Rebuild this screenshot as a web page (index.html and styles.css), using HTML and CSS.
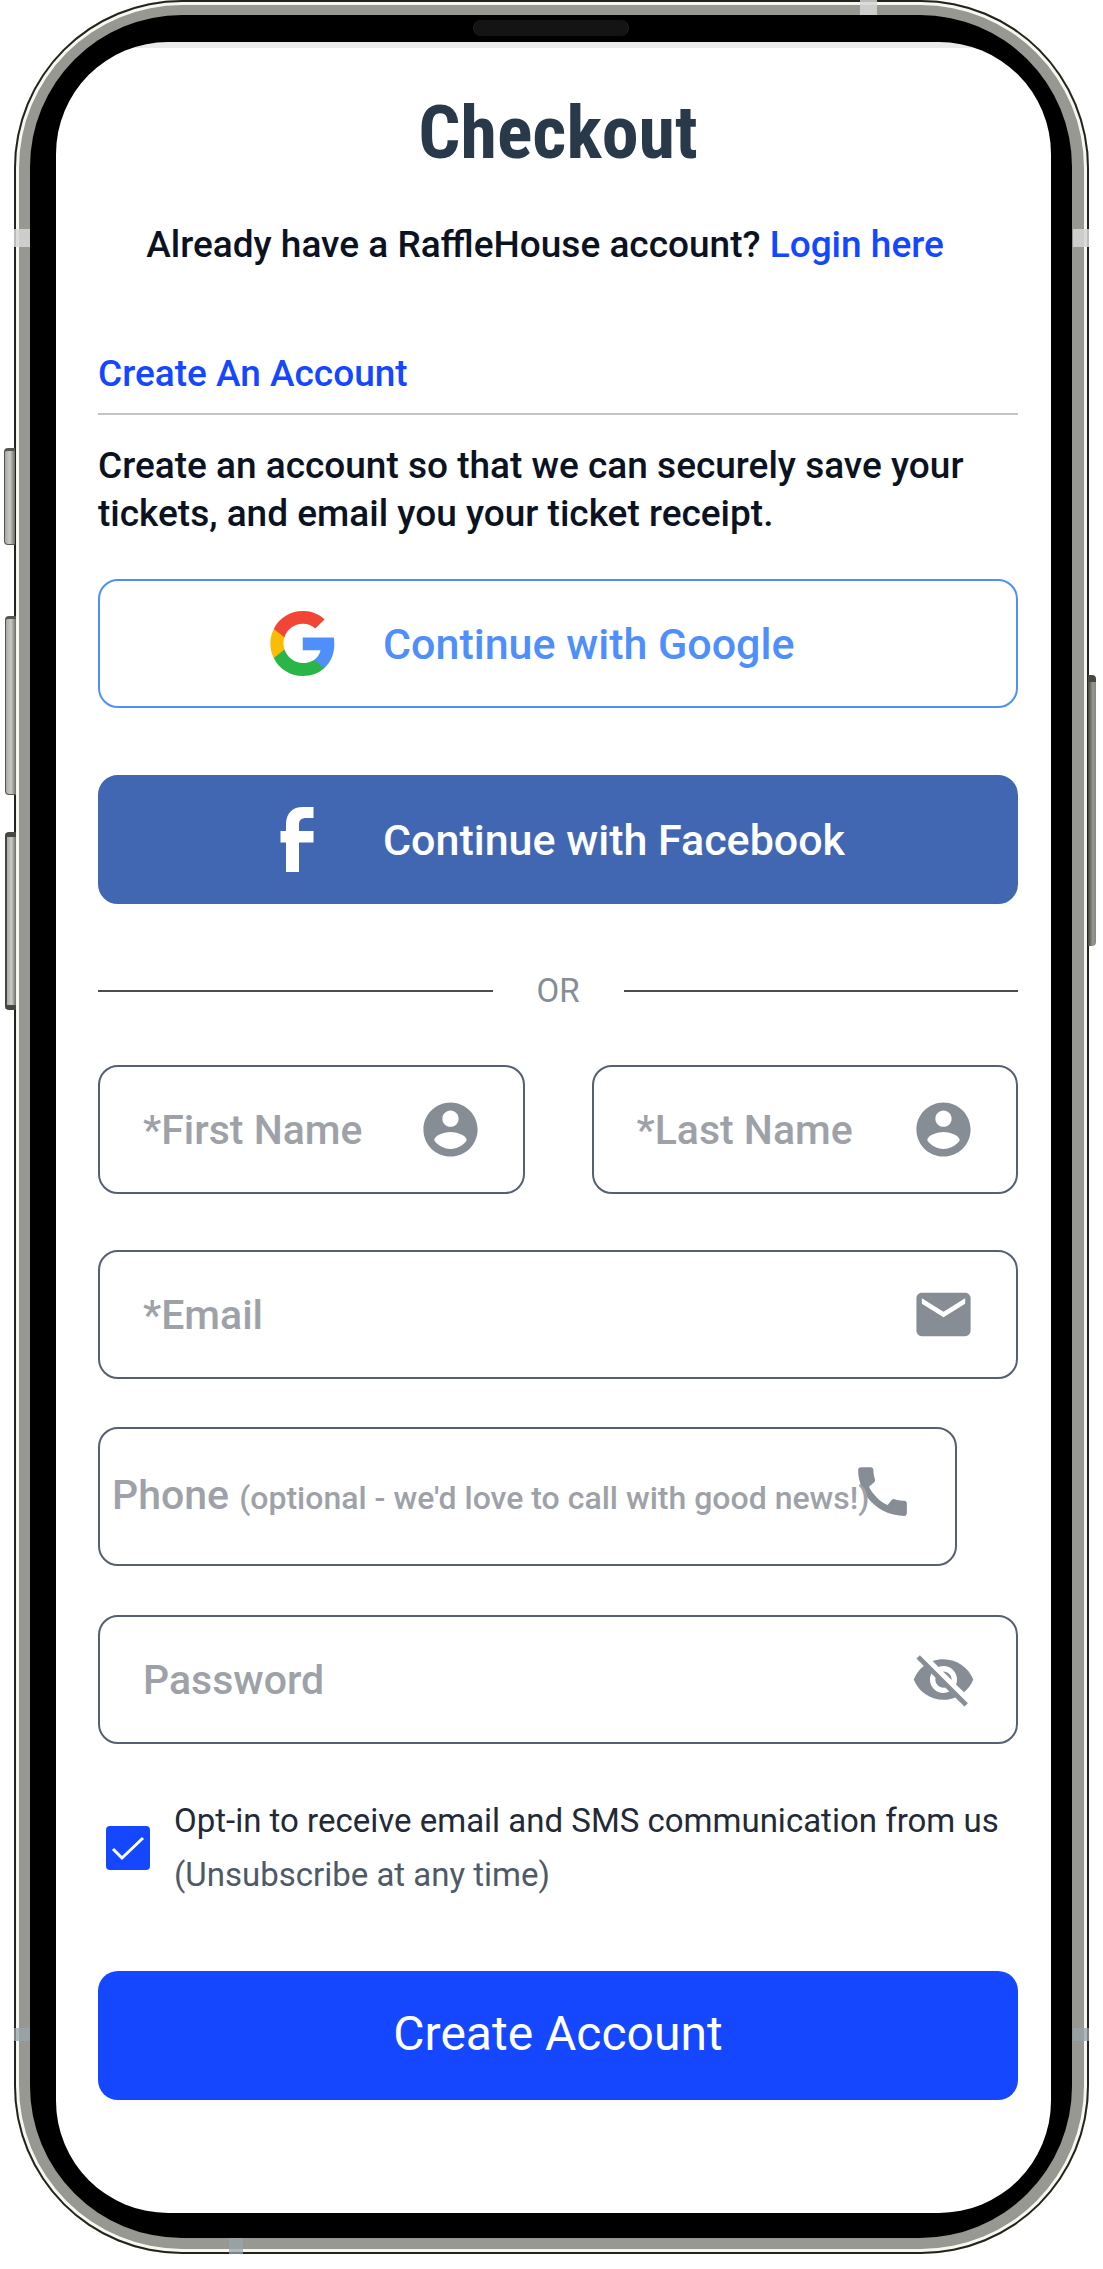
FILE: index.html
```html
<!DOCTYPE html>
<html lang="en">
<head>
<meta charset="utf-8">
<meta name="viewport" content="width=device-width, initial-scale=1">
<title>Checkout</title>
<link rel="stylesheet" href="styles.css">
</head>
<body>
<div class="phone">
  <span class="key key-mute"></span>
  <span class="key key-up"></span>
  <span class="key key-down"></span>
  <span class="key key-power"></span>
  <span class="band band-top"></span>
  <span class="band band-left"></span>
  <span class="band band-right"></span>
  <span class="band band-cool band-low-left"></span>
  <span class="band band-cool band-low-right"></span>
  <span class="band band-cool band-bottom"></span>
  <div class="bezel">
    <span class="speaker"></span>
    <main class="screen">
      <h1 class="title">Checkout</h1>
      <p class="login">Already have a RaffleHouse account? <a class="link" href="#login">Login here</a></p>

      <h2 class="section-title">Create An Account</h2>
      <p class="intro">Create an account so that we can securely save your tickets, and email you your ticket receipt.</p>

      <form class="form" action="#">
        <button class="social social-google" type="button">
          <svg class="social-icon" viewBox="0 0 48 48" aria-hidden="true">
            <path fill="#4f8ffb" d="M47.5 24.5c0-1.600-.2-3.300-.4-4.900H24.200v9.300h13.100c-.6 3-2.300 5.500-4.800 7.200v6h7.700c4.600-4.200 7.300-10.400 7.300-17.600z"/>
            <path fill="#29b548" d="M24.200 48c6.500 0 12-2.100 16-5.900l-7.700-6c-2.200 1.500-5 2.300-8.300 2.300-6.300 0-11.600-4.200-13.500-9.900H2.800v6.200C6.700 42.700 14.800 48 24.200 48z"/>
            <path fill="#fbbc05" d="M10.700 28.500c-1-3-1-6.100 0-9.100v-6.200H2.800c-3.400 6.800-3.400 14.700 0 21.500z"/>
            <path fill="#f24535" d="M24.200 9.500c3.400-.1 6.800 1.200 9.200 3.500l6.900-6.800C35.900 2.100 30.200-.1 24.200 0 14.800 0 6.700 5.300 2.800 13.200l7.900 6.200c1.900-5.700 7.200-9.900 13.500-9.900z"/>
          </svg>
          <span>Continue with Google</span>
        </button>
        <button class="social social-facebook" type="button">
          <svg class="social-icon" viewBox="0 0 65 65" aria-hidden="true">
            <path fill="#fff" d="M16 65V35.500H10.500V24H16v-6.500C16 6 22.500 0 33 0h10.500v11H36.500c-5 0-7.500 2-7.500 6.500V24h14.500v11.500H29V65z"/>
          </svg>
          <span>Continue with Facebook</span>
        </button>

        <div class="divider"><span class="divider-text">OR</span></div>

        <div class="names">
          <div class="field">
            <input class="input" type="text" name="first" placeholder="*First Name" aria-label="First Name">
            <svg class="icon" viewBox="0 0 24 24" aria-hidden="true"><path d="M12 2C6.480 2 2 6.480 2 12s4.480 10 10 10 10-4.480 10-10S17.520 2 12 2zm0 3c1.660 0 3 1.340 3 3s-1.340 3-3 3-3-1.340-3-3 1.340-3 3-3zm0 14.200c-2.500 0-4.710-1.280-6-3.220.03-1.990 4-3.080 6-3.080 1.990 0 5.970 1.090 6 3.080-1.290 1.940-3.500 3.220-6 3.220z"/></svg>
          </div>
          <div class="field">
            <input class="input" type="text" name="last" placeholder="*Last Name" aria-label="Last Name">
            <svg class="icon" viewBox="0 0 24 24" aria-hidden="true"><path d="M12 2C6.480 2 2 6.480 2 12s4.480 10 10 10 10-4.480 10-10S17.520 2 12 2zm0 3c1.660 0 3 1.340 3 3s-1.340 3-3 3-3-1.340-3-3 1.340-3 3-3zm0 14.200c-2.500 0-4.710-1.280-6-3.220.03-1.990 4-3.080 6-3.080 1.990 0 5.970 1.090 6 3.080-1.290 1.940-3.500 3.220-6 3.220z"/></svg>
          </div>
        </div>

        <div class="field">
          <input class="input" type="email" name="email" placeholder="*Email" aria-label="Email">
          <svg class="icon" viewBox="0 0 24 24" aria-hidden="true"><path d="M20 4H4c-1.100 0-1.990.9-1.990 2L2 18c0 1.100.9 2 2 2h16c1.100 0 2-.9 2-2V6c0-1.100-.9-2-2-2zm0 4l-8 5-8-5V6l8 5 8-5v2z"/></svg>
        </div>

        <div class="field field-phone">
          <label class="phone-label" for="tel">Phone <span class="phone-note">(optional - we'd love to call with good news!)</span></label>
          <input class="input" id="tel" type="tel" name="phone">
          <svg class="icon" viewBox="0 0 24 24" aria-hidden="true"><path d="M20.010 15.380c-1.230 0-2.420-.2-3.530-.56-.35-.12-.74-.03-1.010.24l-1.570 1.970c-2.830-1.350-5.480-3.900-6.890-6.830l1.950-1.660c.27-.28.35-.67.24-1.020-.37-1.110-.56-2.300-.56-3.530 0-.54-.45-.99-.99-.99H4.190C3.650 3 3 3.240 3 3.990 3 13.280 10.730 21 20.010 21c.71 0 .99-.63.99-1.180v-3.450c0-.54-.45-.99-.99-.99z"/></svg>
        </div>

        <div class="field">
          <input class="input" type="password" name="password" placeholder="Password" aria-label="Password">
          <svg class="icon" viewBox="0 0 24 24" aria-hidden="true"><path d="M12 7c2.760 0 5 2.240 5 5 0 .65-.13 1.260-.36 1.830l2.920 2.920c1.510-1.260 2.700-2.890 3.430-4.750-1.730-4.390-6-7.500-11-7.500-1.400 0-2.740.25-3.980.7l2.160 2.160C10.740 7.130 11.350 7 12 7zM2 4.270l2.280 2.280.46.46C3.080 8.300 1.780 10.020 1 12c1.730 4.390 6 7.500 11 7.500 1.550 0 3.030-.3 4.380-.84l.42.42L19.730 22 21 20.730 3.270 3 2 4.270zM7.530 9.800l1.550 1.550c-.05.21-.08.43-.08.65 0 1.660 1.340 3 3 3 .22 0 .44-.03.65-.08l1.550 1.550c-.67.33-1.410.53-2.200.53-2.760 0-5-2.240-5-5 0-.79.2-1.530.53-2.200zm4.310-.78l3.150 3.150.02-.16c0-1.660-1.340-3-3-3l-.17.01z"/></svg>
        </div>

        <label class="optin">
          <span class="tick">
            <input class="tick-input" type="checkbox" name="optin" checked>
            <svg class="tick-mark" viewBox="0 0 44 44" aria-hidden="true"><path d="M7 23l9 9L37 12" fill="none" stroke="#fff" stroke-width="3"/></svg>
          </span>
          <span>Opt-in to receive email and SMS communication from us<br><span class="optin-note">(Unsubscribe at any time)</span></span>
        </label>

        <button class="submit" type="submit">Create Account</button>
      </form>
    </main>
  </div>
</div>
</body>
</html>
```
FILE: styles.css
```css
:root {
  --blue: #1447ff;
  --ink: #0b1222;
  --line: #556070;
  --icon: #868d95;
  --placeholder: #9ea2a8;
  --metal: #979891;
}

* { box-sizing: border-box; }

body {
  margin: 0;
  background: #fff;
  color: var(--ink);
  font: 500 37px/48px Roboto, "Liberation Sans", sans-serif;
}

/* Handset */
.phone {
  position: relative;
  margin: 0 14px 15px;
  padding: 15px 17px 16px 16px;
  border-radius: 168px;
  background: var(--metal);
  box-shadow: inset 0 0 0 2px #22231a, inset 0 0 0 5px #f6f7f1;
}

.bezel {
  position: relative;
  padding: 27px 21px 25px 26px;
  border-radius: 152px;
  background: #000;
}

.speaker {
  position: absolute;
  top: 5px;
  left: 50%;
  width: 156px;
  height: 16px;
  margin-left: -78px;
  border: 1px solid #222;
  border-width: 0 1px;
  border-radius: 8px;
  background: #141414;
}

.key {
  position: absolute;
  left: -9px;
  width: 11px;
  border: 1px solid #55574f;
  border-top-width: 3px;
  border-right: 0;
  border-radius: 4px 0 0 4px;
  background: linear-gradient(90deg, #a9aaa4, #c9cac5 50%, #6b6d64);
}
.key-mute { top: 448px; left: -10px; height: 97px; }
.key-up { top: 616px; height: 179px; }
.key-down { top: 832px; height: 178px; border-width: 5px 0 5px 2px; border-color: #45483f; }
.key-power {
  top: 675px;
  right: -7px;
  left: auto;
  width: 8px;
  height: 271px;
  border: 0;
  border-top: 7px solid #45483f;
  border-radius: 0 4px 4px 0;
  background: linear-gradient(90deg, #45483f, #979891 60%, #85877e);
}

.band {
  position: absolute;
  background: rgba(214, 214, 214, .85);
}
.band-top { top: 0; right: 212px; width: 17px; height: 15px; }
.band-left { top: 229px; left: 0; width: 16px; height: 18px; }
.band-right { top: 229px; right: 0; width: 16px; height: 18px; }
.band-cool { background: rgba(152, 166, 172, .75); }
.band-low-left { bottom: 213px; left: 0; width: 16px; height: 13px; }
.band-low-right { right: 0; bottom: 213px; width: 16px; height: 13px; }
.band-bottom { bottom: 0; left: 215px; width: 14px; height: 16px; }

/* Screen */
.screen {
  padding: 47px 33px 113px 42px;
  border-radius: 112px;
  background: linear-gradient(#ebebeb 6px, #fff 6px);
}

.title {
  margin: 0;
  color: #2a394a;
  font: 700 74px/88px "Roboto Condensed", "Liberation Sans Narrow", sans-serif;
  text-align: center;
}

.login {
  margin: 44px 0 0;
  padding-right: 26px;
  text-align: center;
}

.link {
  color: var(--blue);
  text-decoration: none;
}

.section-title {
  margin: 81px 0 0;
  padding-bottom: 15px;
  border-bottom: 2px solid #c4c4c4;
  color: var(--blue);
  font: inherit;
}

.intro { margin: 27px 0 41px; }

.social {
  display: flex;
  align-items: center;
  gap: 48px;
  width: 100%;
  height: 129px;
  padding: 0 0 0 170px;
  border: 2px solid;
  border-radius: 20px;
  font: inherit;
  font-size: 43px;
}
.social-google {
  margin-bottom: 67px;
  border-color: #4f8ffb;
  background: #fff;
  color: #4f8ffb;
}
.social-facebook {
  border-color: #4267b2;
  background: #4267b2;
  color: #fff;
}
.social-icon {
  flex: none;
  width: 65px;
  height: 65px;
}

.divider {
  display: flex;
  align-items: center;
  margin: 63px 0 50px;
  color: #868d95;
  font-size: 33px;
  font-weight: 400;
}
.divider::before,
.divider::after {
  flex: 1;
  height: 2px;
  background: #4c4c4c;
  content: "";
}
.divider-text {
  width: 131px;
  text-align: center;
}

.names {
  display: grid;
  grid-template-columns: repeat(2, minmax(0, 1fr));
  gap: 67px;
  margin-bottom: 56px;
}

.field {
  position: relative;
  display: flex;
  align-items: center;
  height: 129px;
  padding: 0 40px 0 43px;
  border: 2px solid var(--line);
  border-radius: 20px;
}
.field-phone {
  height: 139px;
  margin: 48px 61px 49px 0;
}

.input {
  flex: 1;
  width: 0;
  min-width: 0;
  height: 100%;
  padding: 0;
  border: 0;
  outline: 0;
  background: none;
  color: var(--ink);
  font: inherit;
  font-size: 41px;
}
.input::placeholder {
  color: var(--placeholder);
  opacity: 1;
}

.icon {
  flex: none;
  width: 65px;
  height: 65px;
  fill: var(--icon);
}
.field-phone .icon { margin-bottom: 10px; }

/* Two-size prompt laid over the phone input */
.phone-label {
  position: absolute;
  left: 12px;
  color: var(--placeholder);
  font-size: 41px;
  white-space: nowrap;
}
.phone-note { font-size: 32px; }

.optin {
  display: flex;
  align-items: center;
  gap: 24px;
  margin: 50px 0 69px;
  padding-left: 8px;
  color: #242938;
  font-size: 33px;
  font-weight: 400;
  line-height: 54px;
}
.optin-note { color: #4f5a68; }

.tick {
  display: grid;
  flex: none;
  width: 44px;
  height: 44px;
}
.tick-input,
.tick-mark {
  grid-area: 1 / 1;
  width: 44px;
  height: 44px;
  margin: 0;
}
.tick-input {
  border-radius: 4px;
  background: #c4c4c4;
  appearance: none;
}
.tick-input:checked { background: var(--blue); }
.tick-mark { pointer-events: none; }

.submit {
  display: block;
  width: 100%;
  height: 129px;
  padding: 0 0 4px;
  border: 0;
  border-radius: 20px;
  background: var(--blue);
  color: #fff;
  font: inherit;
  font-size: 48px;
  font-weight: 400;
}
```
